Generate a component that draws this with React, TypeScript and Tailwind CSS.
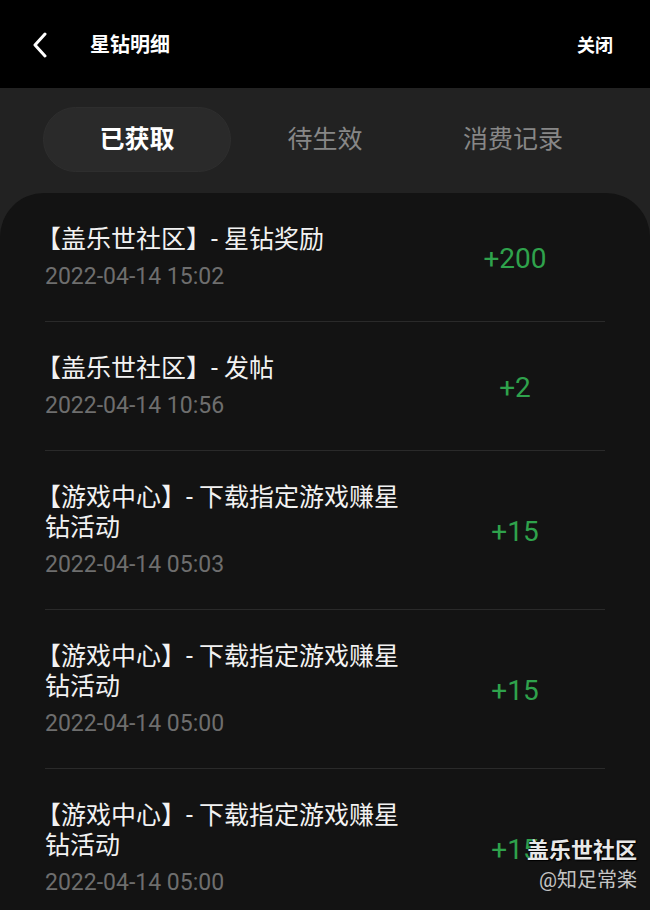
import React from 'react'

const records = [
  { title: '【盖乐世社区】- 星钻奖励', time: '2022-04-14 15:02', amount: '+200' },
  { title: '【盖乐世社区】- 发帖', time: '2022-04-14 10:56', amount: '+2' },
  { title: '【游戏中心】- 下载指定游戏赚星钻活动', time: '2022-04-14 05:03', amount: '+15' },
  { title: '【游戏中心】- 下载指定游戏赚星钻活动', time: '2022-04-14 05:00', amount: '+15' },
  { title: '【游戏中心】- 下载指定游戏赚星钻活动', time: '2022-04-14 05:00', amount: '+15' },
]

const tabs = ['已获取', '待生效', '消费记录']

export default function App() {
  return (
    <div
      className="relative w-[650px] h-[910px] overflow-hidden bg-[#222222]"
      style={{ fontFamily: 'Roboto, "Noto Sans CJK SC", sans-serif' }}
    >
      {/* Header */}
      <div className="h-[88px] bg-black flex items-center px-[32px] pt-[2px]">
        <svg width="16" height="26" viewBox="0 0 16 26" className="shrink-0">
          <path d="M13 2 L3 13 L13 24" fill="none" stroke="#ffffff" strokeWidth="3" strokeLinecap="round" strokeLinejoin="round" />
        </svg>
        <h1 className="ml-[42px] text-[20px] font-bold text-white">星钻明细</h1>
        <button className="ml-auto mr-[5px] text-[18px] font-bold text-white">关闭</button>
      </div>

      {/* Tabs */}
      <div className="px-[43px] pt-[19px] pb-[21px] grid grid-cols-3">
        {tabs.map((t, i) => (
          <div
            key={t}
            className={`h-[65px] rounded-full flex items-center justify-center text-[25px] ${
              i === 0
                ? 'bg-[#2a2a2a] border border-[#2e2e2e] font-bold text-white'
                : 'text-[#878787]'
            }`}
          >
            {t}
          </div>
        ))}
      </div>

      {/* Records */}
      <div className="bg-[#131313] rounded-t-[44px] min-h-[720px]">
        {records.map((r, i) => (
          <div key={i} className="mx-[45px] border-b border-[#2a2a2a] pt-[32px] pb-[29px] flex items-center">
            <div className="w-[365px]">
              <p className="-indent-[9px] text-[25px] leading-[30px] text-[#f2f2f2]">{r.title}</p>
              <p className="mt-[7px] text-[23px] leading-[30px] text-[#6e6e6e]">{r.time}</p>
            </div>
            <div className="ml-auto w-[180px] text-center text-[28px] text-[#2fa24c]">{r.amount}</div>
          </div>
        ))}
      </div>

      {/* Watermark */}
      <div className="absolute right-[13px] bottom-[20px] flex flex-col items-end leading-none">
        <span
          className="text-[22px] font-bold text-[#e8e8e8]"
          style={{ textShadow: '0 0 2px #000, 1px 1px 1px #000' }}
        >
          盖乐世社区
        </span>
        <span className="mt-[8px] text-[20px] text-[#c4c4c4]">@知足常楽</span>
      </div>
    </div>
  )
}
